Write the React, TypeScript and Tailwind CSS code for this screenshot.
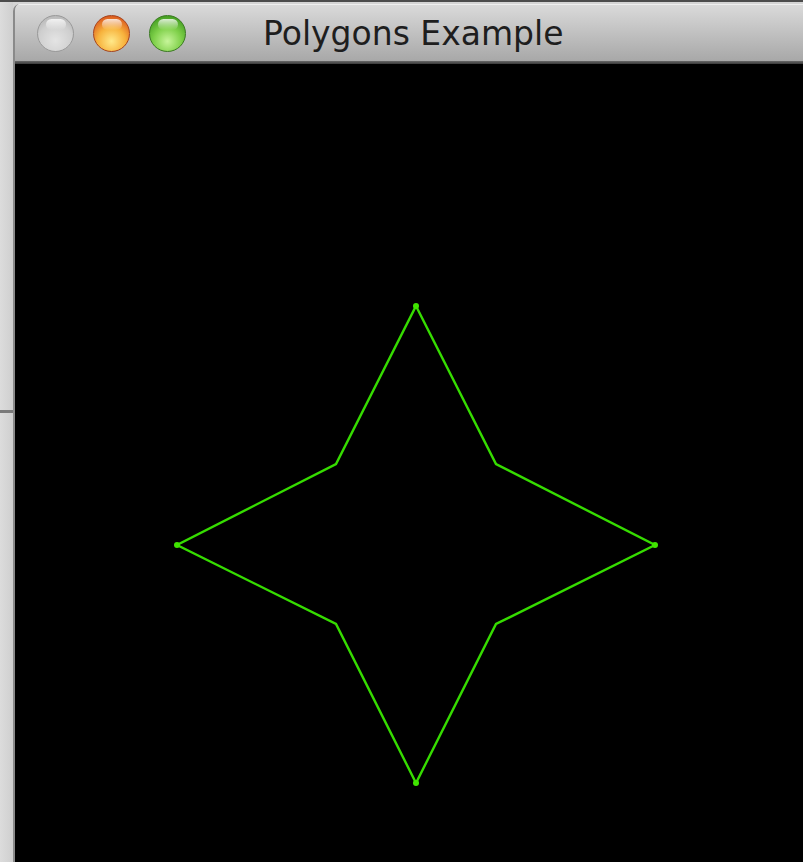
const STAR = [
  [401, 242],
  [481, 400],
  [640, 481],
  [481, 560],
  [401, 719],
  [321, 560],
  [162, 481],
  [321, 400],
];

function TrafficLight({ tone }: { tone: "off" | "amber" | "green" }) {
  const fill =
    tone === "off"
      ? "bg-[radial-gradient(circle_at_50%_70%,#e4e4e4_0%,#cfcfcf_55%,#a9a9a9_100%)] border-[#9a9a9a]"
      : tone === "amber"
        ? "bg-[radial-gradient(circle_at_50%_72%,#ffe98a_0%,#f7b23c_45%,#d9531c_85%,#b8361a_100%)] border-[#a5441e]"
        : "bg-[radial-gradient(circle_at_50%_72%,#c7f59a_0%,#7fd04a_45%,#3f9a1e_85%,#2f7a17_100%)] border-[#3b7a22]";
  return (
    <div className={`relative h-[37px] w-[37px] rounded-full border ${fill}`}>
      <div className="absolute left-1/2 top-[3px] h-[11px] w-[20px] -translate-x-1/2 rounded-full bg-gradient-to-b from-white/80 to-white/0" />
    </div>
  );
}

export default function App() {
  const pts = STAR.map(([x, y]) => `${x},${y}`).join(" ");
  return (
    <div className="flex h-[862px] w-[803px] flex-col overflow-hidden bg-[#d4d4d4]">
      <div className="h-[2px] shrink-0 bg-[#4c4c4c]" />
      <div className="flex min-h-0 flex-1">
        {/* desktop strip behind the window */}
        <div className="flex w-[13px] shrink-0 flex-col bg-gradient-to-r from-[#dcdcdc] to-[#cfcfcf]">
          <div className="h-[408px]" />
          <div className="h-[3px] bg-[#7a7a7a]" />
        </div>
        <div className="mt-[2px] flex min-w-0 flex-1 flex-col overflow-hidden rounded-tl-[7px] border-l-2 border-[#8a8a8a]">
          <div className="flex h-[57px] shrink-0 items-center border-t border-[#efefef] bg-gradient-to-b from-[#dadada] to-[#a8a8a8] pl-[22px]">
            <div className="flex gap-[19px]">
              <TrafficLight tone="off" />
              <TrafficLight tone="amber" />
              <TrafficLight tone="green" />
            </div>
            <div className="ml-[77px] pt-[1px] font-['DejaVu_Sans',sans-serif] text-[33px] leading-none text-[#1e1e1e]">
              Polygons Example
            </div>
          </div>
          <div className="h-[3px] shrink-0 bg-gradient-to-b from-[#6a6a6a] to-[#3a3a3a]" />
          <div className="min-h-0 flex-1 bg-black">
            <svg width="789" height="799" viewBox="0 0 789 799" className="block">
              <polygon
                points={pts}
                fill="none"
                stroke="#36dc00"
                strokeWidth="2.4"
                strokeLinejoin="miter"
              />
              {STAR.filter((_, i) => i % 2 === 0).map(([x, y]) => (
                <circle key={`${x}-${y}`} cx={x} cy={y} r="3" fill="#40e400" />
              ))}
            </svg>
          </div>
        </div>
      </div>
    </div>
  );
}
